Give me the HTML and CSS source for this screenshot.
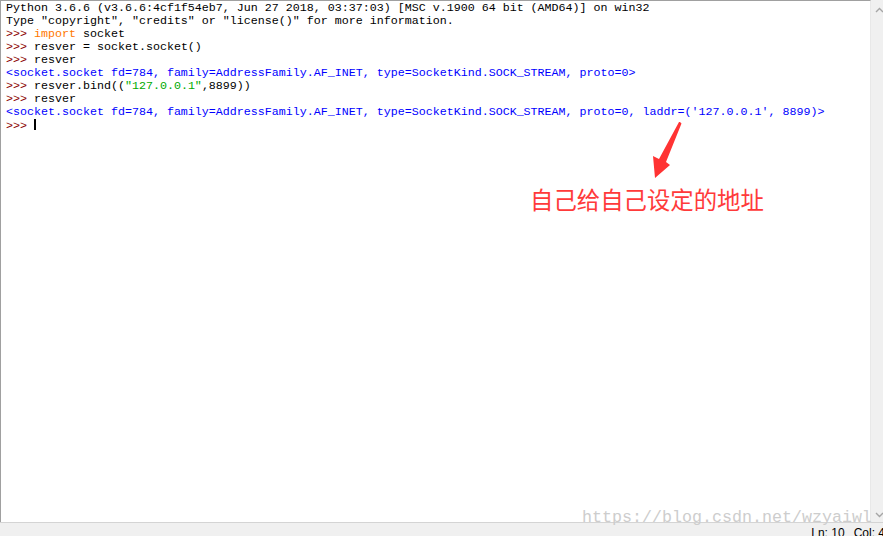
FILE: index.html
```html
<!DOCTYPE html>
<html lang="zh">
  <head>
    <meta charset="UTF-8" />
    <title>Python 3.6.6 Shell</title>
    <link rel="stylesheet" href="styles.css">
  </head>
  <body>
    <div class="shell-window">
      <div class="shell-main">
        <pre class="shell-text"><span class="out">Python 3.6.6 (v3.6.6:4cf1f54eb7, Jun 27 2018, 03:37:03) [MSC v.1900 64 bit (AMD64)] on win32
Type "copyright", "credits" or "license()" for more information.</span>
<span class="prompt">&gt;&gt;&gt; </span><span class="kw">import</span> socket
<span class="prompt">&gt;&gt;&gt; </span>resver = socket.socket()
<span class="prompt">&gt;&gt;&gt; </span>resver
<span class="stdout">&lt;socket.socket fd=784, family=AddressFamily.AF_INET, type=SocketKind.SOCK_STREAM, proto=0&gt;</span>
<span class="prompt">&gt;&gt;&gt; </span>resver.bind((<span class="str">"127.0.0.1"</span>,8899))
<span class="prompt">&gt;&gt;&gt; </span>resver
<span class="stdout">&lt;socket.socket fd=784, family=AddressFamily.AF_INET, type=SocketKind.SOCK_STREAM, proto=0, laddr=('127.0.0.1', 8899)&gt;</span>
<span class="prompt">&gt;&gt;&gt; </span><span class="cursor"></span></pre>
        <div class="scrollbar">
          <svg class="arrow" width="9" height="6" viewBox="0 0 9 6">
            <polyline points="1,5 4.5,1.5 8,5" fill="none" stroke="#a6a6a6" stroke-width="1.4" />
          </svg>
          <svg class="arrow" width="9" height="6" viewBox="0 0 9 6">
            <polyline points="1,1 4.5,4.5 8,1" fill="none" stroke="#a6a6a6" stroke-width="1.4" />
          </svg>
        </div>
      </div>
      <div class="status-bar">
        <div class="status-items">
          <span>Ln: 10</span>
          <span>Col: 4</span>
        </div>
      </div>

      <!-- annotation drawn over the screenshot -->
      <svg class="note-arrow" width="40" height="62" viewBox="0 0 40 62">
        <polygon points="29,0 30.5,1.5 15,40 19,43 4,56 2,34 8,37 28,0" fill="#ff3333" />
      </svg>
      <div class="note-text">自己给自己设定的地址</div>
      <div class="watermark">https://blog.csdn.net/wzyaiwl</div>
    </div>
  </body>
</html>
```

FILE: styles.css
```css
/* Reset */
* {
  margin: 0;
  padding: 0;
  box-sizing: border-box;
}

body {
  background: #ffffff;
  overflow: hidden;
  height: 536px;
}

.shell-window {
  position: relative;
  width: 888px;
  height: 536px;
  display: flex;
  flex-direction: column;
}

.shell-main {
  flex: 1;
  display: flex;
  min-height: 0;
}

/* Shell text area */
.shell-text {
  flex: 1;
  border-top: 1px solid #a0a0a0;
  border-left: 1px solid #a0a0a0;
  border-right: 1px solid #e8e8e8;
  padding: 1px 0 0 5px;
  font-family: "Liberation Mono", monospace;
  font-size: 11.66px;
  line-height: 13px;
  color: #000000;
  background: #ffffff;
  white-space: pre;
  overflow: hidden;
}

.prompt {
  color: #8b0000;
}

.kw {
  color: #ff7700;
}

.stdout {
  color: #0000ff;
}

.str {
  color: #00aa00;
}

.cursor {
  display: inline-block;
  width: 2px;
  height: 11px;
  background: #000000;
  vertical-align: -1px;
}

/* Scrollbar */
.scrollbar {
  width: 17px;
  background: #f0f0f0;
  display: flex;
  flex-direction: column;
  justify-content: space-between;
  align-items: center;
  padding: 6px 0 4px;
  border-top: 1px solid #f0f0f0;
}

.arrow {
  display: block;
}

/* Status bar */
.status-bar {
  height: 14px;
  border-top: 1px solid #d4d4d4;
  background: #f0f0f0;
  display: flex;
  justify-content: flex-end;
  overflow: hidden;
}

.status-items {
  display: flex;
  gap: 9px;
  margin-right: 3px;
  padding-top: 3px;
  font-family: "Liberation Sans", Arial, sans-serif;
  font-size: 12px;
  line-height: 15px;
  color: #000000;
  white-space: nowrap;
}

/* Annotation overlay */
.note-arrow {
  position: absolute;
  left: 651px;
  top: 122px;
}

.note-text {
  position: absolute;
  left: 530px;
  top: 188px;
  font-family: "Noto Sans CJK SC", sans-serif;
  font-size: 23.4px;
  line-height: 1;
  color: #ff3a3a;
  white-space: nowrap;
}

.watermark {
  position: absolute;
  left: 582px;
  top: 508px;
  font-family: "Liberation Mono", monospace;
  font-size: 16.66px;
  color: #cdcdcd;
  white-space: nowrap;
}
```
